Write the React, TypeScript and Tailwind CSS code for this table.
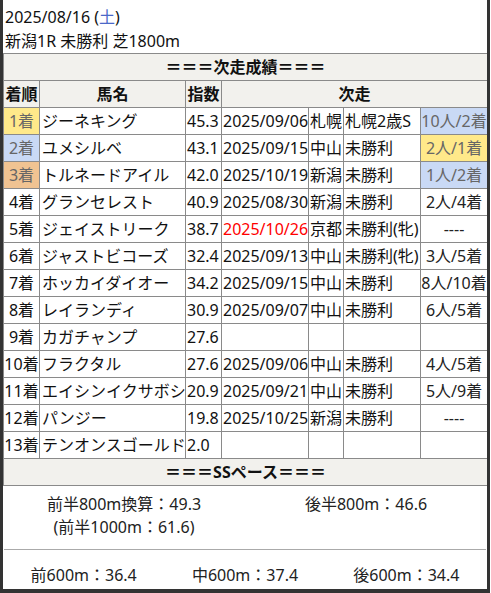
/**
 * Race result summary card
 */

type Row = {
  rank: string
  rankBg?: string
  name: string
  score: string
  date?: string
  dateRed?: boolean
  place?: string
  race?: string
  result?: string
  resultBg?: string
}

const rows: Row[] = [
  { rank: '1着', rankBg: 'bg-[#ffe98a]', name: 'ジーネキング', score: '45.3', date: '2025/09/06', place: '札幌', race: '札幌2歳S', result: '10人/2着', resultBg: 'bg-[#c9d9f5]' },
  { rank: '2着', rankBg: 'bg-[#c9d9f5]', name: 'ユメシルベ', score: '43.1', date: '2025/09/15', place: '中山', race: '未勝利', result: '2人/1着', resultBg: 'bg-[#ffe98a]' },
  { rank: '3着', rankBg: 'bg-[#f0c392]', name: 'トルネードアイル', score: '42.0', date: '2025/10/19', place: '新潟', race: '未勝利', result: '1人/2着', resultBg: 'bg-[#c9d9f5]' },
  { rank: '4着', name: 'グランセレスト', score: '40.9', date: '2025/08/30', place: '新潟', race: '未勝利', result: '2人/4着' },
  { rank: '5着', name: 'ジェイストリーク', score: '38.7', date: '2025/10/26', dateRed: true, place: '京都', race: '未勝利(牝)', result: '----' },
  { rank: '6着', name: 'ジャストビコーズ', score: '32.4', date: '2025/09/13', place: '中山', race: '未勝利(牝)', result: '3人/5着' },
  { rank: '7着', name: 'ホッカイダイオー', score: '34.2', date: '2025/09/15', place: '中山', race: '未勝利', result: '8人/10着' },
  { rank: '8着', name: 'レイランディ', score: '30.9', date: '2025/09/07', place: '中山', race: '未勝利', result: '6人/5着' },
  { rank: '9着', name: 'カガチャンプ', score: '27.6' },
  { rank: '10着', name: 'フラクタル', score: '27.6', date: '2025/09/06', place: '中山', race: '未勝利', result: '4人/5着' },
  { rank: '11着', name: 'エイシンイクサボシ', score: '20.9', date: '2025/09/21', place: '中山', race: '未勝利', result: '5人/9着' },
  { rank: '12着', name: 'パンジー', score: '19.8', date: '2025/10/25', place: '新潟', race: '未勝利', result: '----' },
  { rank: '13着', name: 'テンオンスゴールド', score: '2.0' },
]

const cell = 'border border-[#8a8a8a] h-[27px] p-0 whitespace-nowrap overflow-hidden'

export default function App() {
  return (
    <div
      className="w-[490px] h-[593px] bg-white border-l-[3px] border-r-[3px] border-b-[4px] border-[#333] text-[16px] text-[#111] overflow-hidden"
      style={{ fontFamily: '"Noto Sans", "Noto Sans CJK JP", sans-serif' }}
    >
      <div className="pt-[5px] pl-[2px] leading-6">
        <div>
          2025/08/16 (<span className="text-[#4a68c8]">土</span>)
        </div>
        <div>新潟1R 未勝利 芝1800m</div>
      </div>

      <table className="w-[484px] table-fixed border-collapse leading-none">
        <colgroup>
          <col className="w-[36px]" />
          <col className="w-[146px]" />
          <col className="w-[36px]" />
          <col className="w-[87px]" />
          <col className="w-[35px]" />
          <col className="w-[77px]" />
          <col className="w-[67px]" />
        </colgroup>
        <tbody>
          <tr className="bg-[#f2f1ed]">
            <td colSpan={7} className={`${cell} text-center font-bold`}>
              ＝＝＝次走成績＝＝＝
            </td>
          </tr>
          <tr className="bg-[#f2f1ed] font-bold">
            <td className={`${cell} text-center`}>着順</td>
            <td className={`${cell} text-center`}>馬名</td>
            <td className={`${cell} text-center`}>指数</td>
            <td colSpan={4} className={`${cell} text-center`}>
              次走
            </td>
          </tr>
          {rows.map((r) => (
            <tr key={r.rank}>
              <td className={`${cell} text-center ${r.rankBg ? `${r.rankBg} text-[#666]` : ''}`}>{r.rank}</td>
              <td className={`${cell} pl-[2px]`}>{r.name}</td>
              <td className={`${cell} pl-[1px]`}>{r.score}</td>
              <td className={`${cell} pl-[1px] ${r.dateRed ? 'text-[#ff0000]' : ''}`}>{r.date}</td>
              <td className={`${cell} pl-[1px]`}>{r.place}</td>
              <td className={`${cell} pl-[1px]`}>{r.race}</td>
              <td className={`${cell} text-center ${r.resultBg ? `${r.resultBg} text-[#666]` : 'text-[#222]'}`}>
                {r.result}
              </td>
            </tr>
          ))}
          <tr className="bg-[#f2f1ed]">
            <td colSpan={7} className={`${cell} text-center font-bold`}>
              ＝＝＝SSペース＝＝＝
            </td>
          </tr>
        </tbody>
      </table>

      <div className="w-[484px] text-[#222] leading-[23px]">
        <div className="grid grid-cols-2 pt-[7px] pb-[10px]">
          <div className="text-center">
            <div>前半800m換算：49.3</div>
            <div>(前半1000m：61.6)</div>
          </div>
          <div className="text-center">後半800m：46.6</div>
        </div>
        <div className="mx-[1px] border-t border-[#aaa]" />
        <div className="grid grid-cols-3 pt-[14px]">
          <div className="text-center">前600m：36.4</div>
          <div className="text-center">中600m：37.4</div>
          <div className="text-center">後600m：34.4</div>
        </div>
      </div>
    </div>
  )
}
